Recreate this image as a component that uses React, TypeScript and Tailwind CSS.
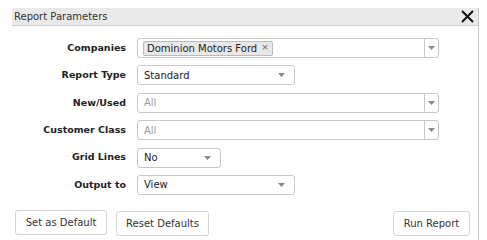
import React from "react";

const font = "font-['Verdana','DejaVu_Sans',sans-serif]";

function Caret() {
  return (
    <svg width="7" height="4" viewBox="0 0 7 4" className="shrink-0">
      <path d="M0 0H7L3.5 4Z" fill="#888" />
    </svg>
  );
}

function Select({ value, width }: { value: string; width: string }) {
  return (
    <div
      className={`flex h-[20px] items-center justify-between rounded-[3px] border border-[#c8c8c8] bg-white pl-[6px] pr-[9px] text-[10px] text-[#222] ${width}`}
    >
      <span>{value}</span>
      <Caret />
    </div>
  );
}

function MultiSelect({ children }: { children: React.ReactNode }) {
  return (
    <div className="flex h-[20px] w-[302px] items-stretch rounded-[3px] border border-[#c8c8c8] bg-white text-[10px]">
      <div className="flex flex-1 items-center pl-[5px]">{children}</div>
      <div className="flex w-[14px] items-center justify-center border-l border-[#c8c8c8]">
        <Caret />
      </div>
    </div>
  );
}

type Row = { label: string; field: React.ReactNode };

const rows: Row[] = [
  {
    label: "Companies",
    field: (
      <MultiSelect>
        <span className="flex h-[15px] items-center gap-[4px] rounded-[2px] border border-[#bbb] bg-[#e8e8e8] px-[3px] text-[#222]">
          Dominion Motors Ford
          <span className="text-[9px] text-[#666]">×</span>
        </span>
      </MultiSelect>
    ),
  },
  { label: "Report Type", field: <Select value="Standard" width="w-[158px]" /> },
  {
    label: "New/Used",
    field: (
      <MultiSelect>
        <span className="pl-[1px] text-[#999]">All</span>
      </MultiSelect>
    ),
  },
  {
    label: "Customer Class",
    field: (
      <MultiSelect>
        <span className="pl-[1px] text-[#999]">All</span>
      </MultiSelect>
    ),
  },
  { label: "Grid Lines", field: <Select value="No" width="w-[84px]" /> },
  { label: "Output to", field: <Select value="View" width="w-[158px]" /> },
];

function Button({ children, width }: { children: React.ReactNode; width: string }) {
  return (
    <button
      className={`h-[25px] rounded-[3px] border border-[#d4d4d4] bg-white text-[10px] text-[#333] ${width}`}
    >
      {children}
    </button>
  );
}

export default function App() {
  return (
    <div className={`h-[240px] w-[487px] bg-white pl-[12px] pt-[8px] ${font}`}>
      <div className="flex h-[232px] w-[467px] flex-col border-r border-[#c8c8c8]">
        {/* header */}
        <div className="flex h-[18px] items-center justify-between border-b border-[#d0d0d0] bg-[#e9e9e9] pl-[2px] pr-[4px]">
          <span className="text-[10px] text-[#333]">Report Parameters</span>
          <svg width="13" height="13" viewBox="0 0 13 13">
            <path d="M1 1L12 12M12 1L1 12" stroke="#111" strokeWidth="2" />
          </svg>
        </div>

        {/* form */}
        <div className="mt-[12px] flex flex-col gap-[7.4px]">
          {rows.map((row) => (
            <div key={row.label} className="flex items-center">
              <div className="w-[114px] text-right text-[9.5px] font-bold text-[#222]">
                {row.label}
              </div>
              <div className="ml-[11px]">{row.field}</div>
            </div>
          ))}
        </div>

        {/* actions */}
        <div className="mt-[15px] flex items-center pl-[3px] pr-[8px]">
          <Button width="w-[92px]">Set as Default</Button>
          <div className="ml-[9px]">
            <Button width="w-[93px]">Reset Defaults</Button>
          </div>
          <div className="ml-auto">
            <Button width="w-[77px]">Run Report</Button>
          </div>
        </div>
      </div>
    </div>
  );
}
